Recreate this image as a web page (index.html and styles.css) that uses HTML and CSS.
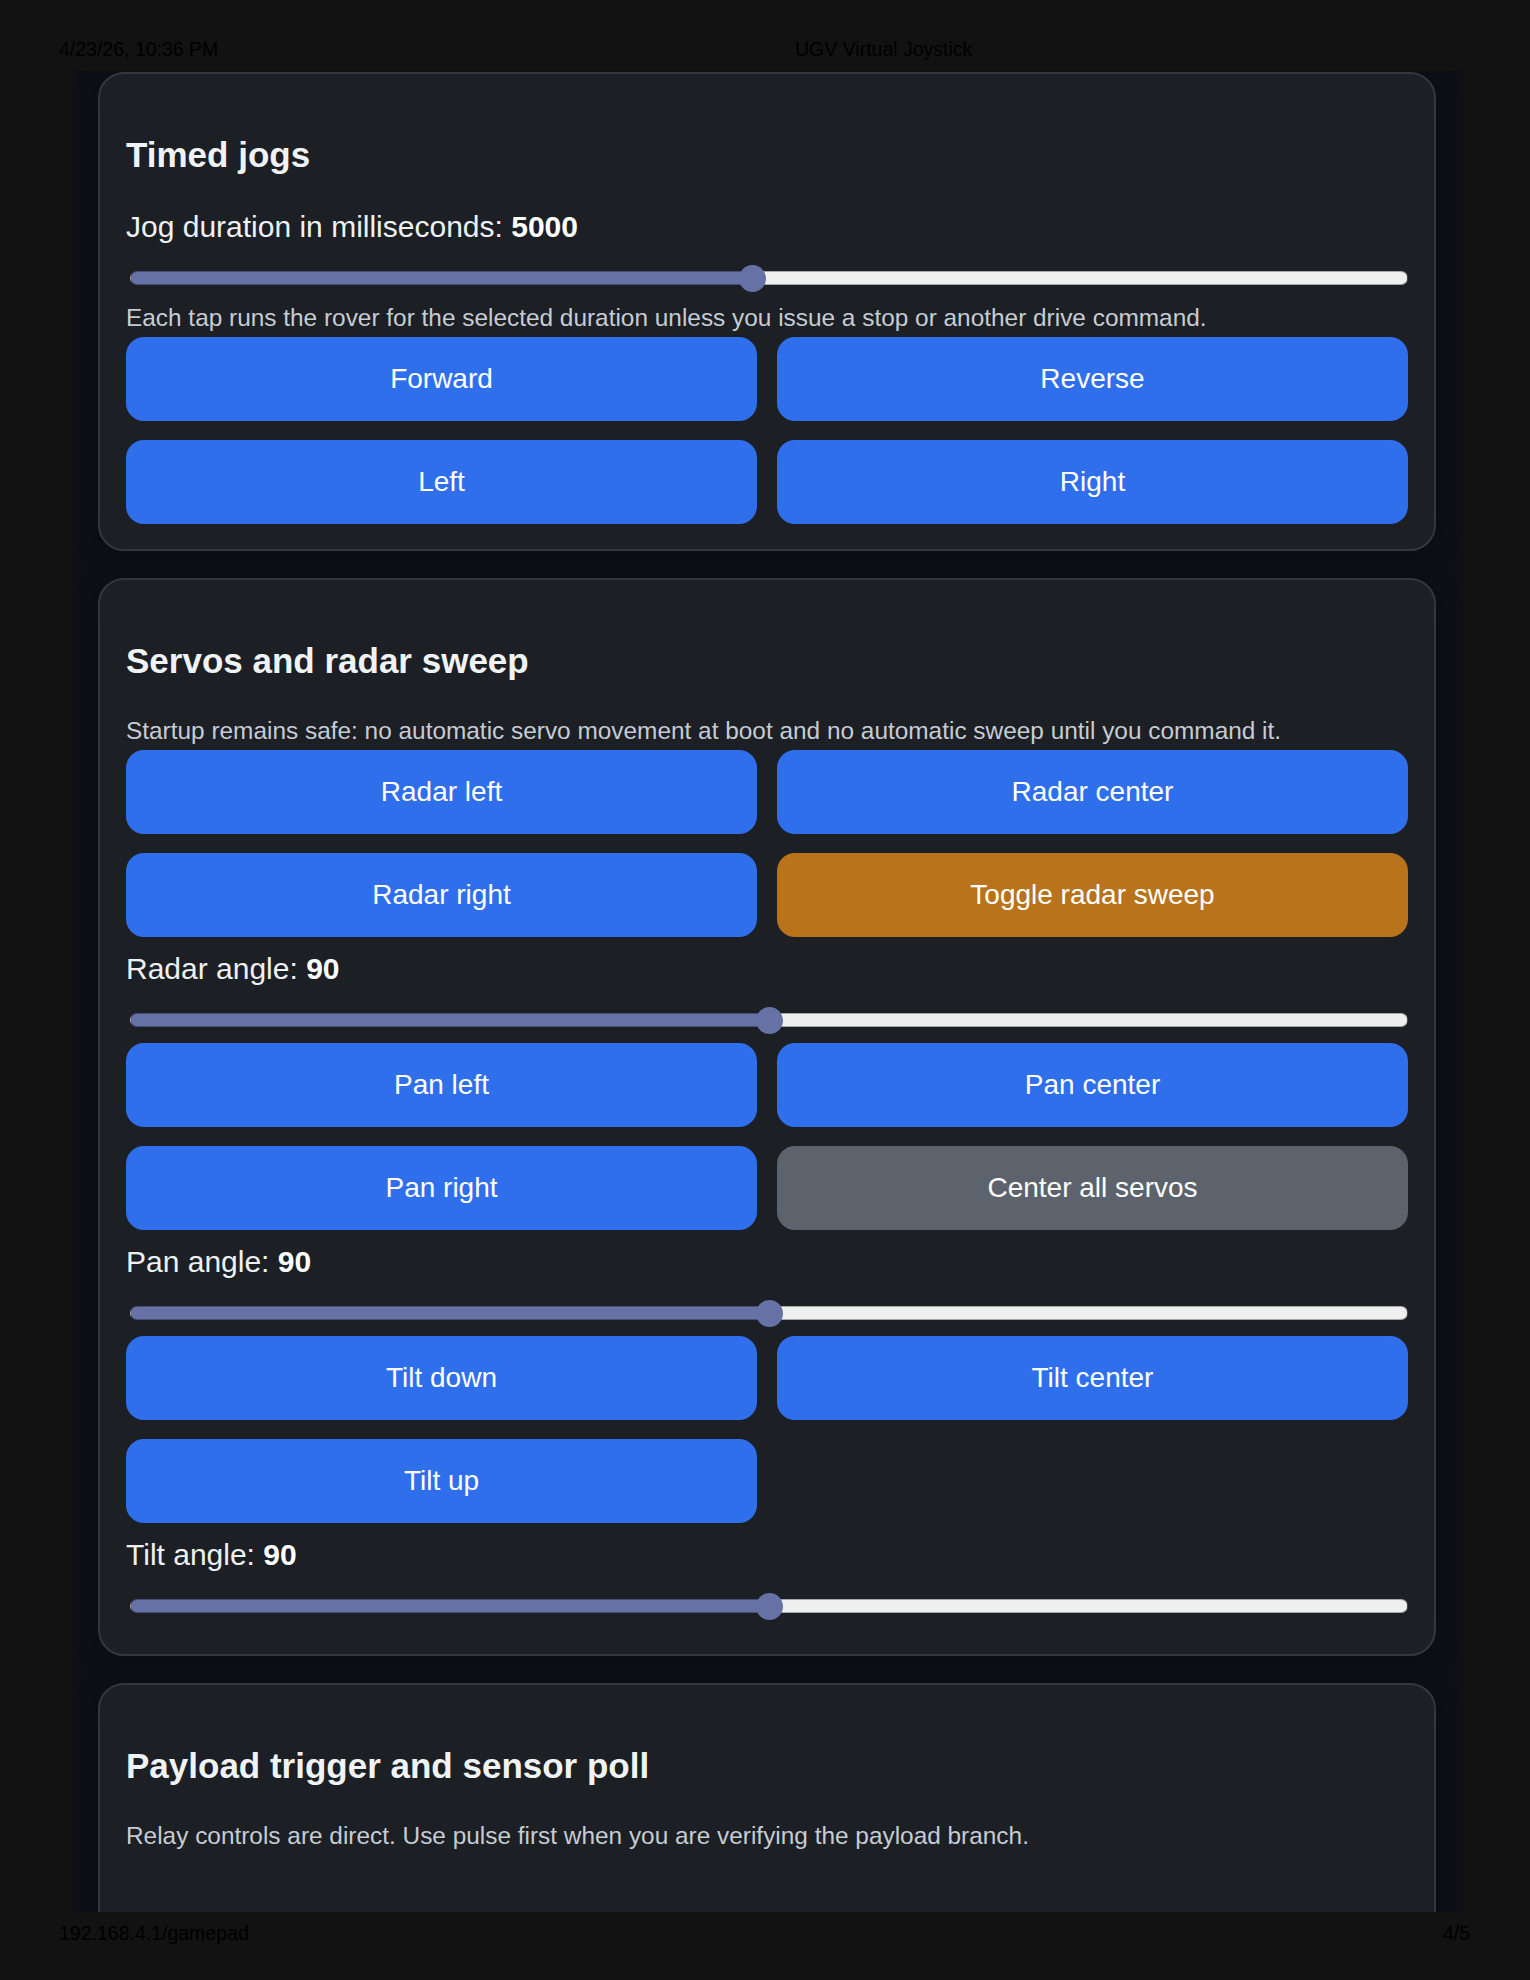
FILE: index.html
```html
<!DOCTYPE html>
<html lang="en">
<head>
    <meta charset="UTF-8">
    <meta name="viewport" content="width=device-width, initial-scale=1.0">
    <title>UGV Virtual Joystick</title>
    <link rel="stylesheet" href="styles.css">
</head>
<body>
    <header class="print-head">
        <span class="print-date">4/23/26, 10:36 PM</span>
        <span class="print-title">UGV Virtual Joystick</span>
    </header>

    <main class="page">
        <section class="card">
            <h2>Timed jogs</h2>
            <label class="field-label" for="jogMs">Jog duration in milliseconds: <strong>5000</strong></label>
            <input type="range" id="jogMs" class="slider" min="250" max="10000" step="50" value="5000" style="--p: 0.4872">
            <p class="hint">Each tap runs the rover for the selected duration unless you issue a stop or another drive command.</p>
            <div class="btn-grid">
                <button class="btn">Forward</button>
                <button class="btn">Reverse</button>
                <button class="btn">Left</button>
                <button class="btn">Right</button>
            </div>
        </section>

        <section class="card">
            <h2>Servos and radar sweep</h2>
            <p class="hint">Startup remains safe: no automatic servo movement at boot and no automatic sweep until you command it.</p>
            <div class="btn-grid">
                <button class="btn">Radar left</button>
                <button class="btn">Radar center</button>
                <button class="btn">Radar right</button>
                <button class="btn warn">Toggle radar sweep</button>
            </div>
            <label class="field-label" for="radarAngle">Radar angle: <strong>90</strong></label>
            <input type="range" id="radarAngle" class="slider" min="0" max="180" value="90" style="--p: 0.5">

            <div class="btn-grid">
                <button class="btn">Pan left</button>
                <button class="btn">Pan center</button>
                <button class="btn">Pan right</button>
                <button class="btn muted">Center all servos</button>
            </div>
            <label class="field-label" for="panAngle">Pan angle: <strong>90</strong></label>
            <input type="range" id="panAngle" class="slider" min="0" max="180" value="90" style="--p: 0.5">

            <div class="btn-grid">
                <button class="btn">Tilt down</button>
                <button class="btn">Tilt center</button>
                <button class="btn">Tilt up</button>
            </div>
            <label class="field-label" for="tiltAngle">Tilt angle: <strong>90</strong></label>
            <input type="range" id="tiltAngle" class="slider" min="0" max="180" value="90" style="--p: 0.5">
        </section>

        <section class="card card-cut">
            <h2>Payload trigger and sensor poll</h2>
            <p class="hint">Relay controls are direct. Use pulse first when you are verifying the payload branch.</p>
        </section>
    </main>

    <footer class="print-foot">
        <span>192.168.4.1/gamepad</span>
        <span>4/5</span>
    </footer>
</body>
</html>
```

FILE: styles.css
```css
* {
    box-sizing: border-box;
}
body {
    margin: 0;
    width: 1530px;
    height: 1980px;
    background: #121212;
    font-family: 'Liberation Sans', Arial, Helvetica, sans-serif;
    color: #e6edf3;
    overflow: hidden;
}
.print-head {
    display: flex;
    height: 71px;
    padding: 38px 0 0 59px;
    font-size: 19.5px;
    color: #000;
}
.print-date {
    width: 736px;
}
.page {
    height: 1841px;
    margin: 0 67px 0 73px;
    padding: 1px 27px 0 25px;
    background: #0d1117;
    overflow: hidden;
}
.card {
    background: #1c1f24;
    border: 2px solid #33383f;
    border-radius: 26px;
    padding: 26px 26px 25px;
    margin-bottom: 27px;
    box-shadow: 0 4px 24px rgba(0,0,0,0.35);
}
.card-cut {
    padding-bottom: 200px;
}
.card h2 {
    margin: 34px 0 34px;
    font-size: 35px;
    line-height: 42px;
    font-weight: bold;
    color: #f0f3f6;
}
.field-label {
    display: block;
    font-size: 30px;
    line-height: 36px;
    color: #eef1f4;
    margin-top: 14px;
}
.card h2 + .field-label {
    margin-top: -1px;
}
.field-label strong {
    color: #ffffff;
}
.hint {
    margin: 10px 0 4px;
    font-size: 24.4px;
    line-height: 30px;
    color: #c6ccd4;
}
.btn-grid {
    display: grid;
    grid-template-columns: 1fr 1fr;
    column-gap: 20px;
    row-gap: 19px;
}
.btn {
    height: 84px;
    border: none;
    border-radius: 18px;
    background: #2f6feb;
    color: #ffffff;
    font-family: inherit;
    font-size: 28px;
    cursor: pointer;
}
.btn.warn {
    background: #b8731b;
}
.btn.muted {
    background: #5c636d;
}

/* range sliders */
.slider {
    -webkit-appearance: none;
    appearance: none;
    display: block;
    width: calc(100% - 4px);
    height: 30px;
    margin: 18px 0 8px 4px;
    background: transparent;
}
.slider::-webkit-slider-runnable-track {
    height: 14px;
    border-radius: 7px;
    border: 1px solid rgba(0,0,0,0.3);
    background: linear-gradient(to right, #6672a6 calc(13px + var(--p) * (100% - 27px)), #efefef 0);
}
.slider::-webkit-slider-thumb {
    -webkit-appearance: none;
    width: 27px;
    height: 27px;
    margin-top: -7.5px;
    border-radius: 50%;
    border: none;
    background: #6672a6;
}

.print-foot {
    display: flex;
    justify-content: space-between;
    padding: 10px 60px 0 59px;
    font-size: 19.5px;
    color: #000;
}
```
